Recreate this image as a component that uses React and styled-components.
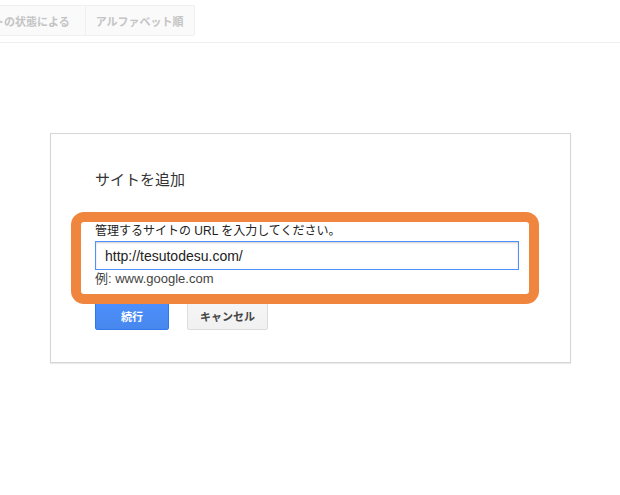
import React from "react";
import styled, { createGlobalStyle } from "styled-components";

const GlobalStyle = createGlobalStyle`
  html, body {
    margin: 0;
    padding: 0;
    background: #fff;
  }
  body {
    font-family: "Liberation Sans", Arial, "Noto Sans CJK JP", sans-serif;
    color: #222;
  }
`;

const Page = styled.div`
  width: 620px;
  height: 495px;
  overflow: hidden;
`;

const TopBar = styled.div`
  height: 43px;
  border-bottom: 1px solid #f0f0f0;
  padding-top: 5px;
  box-sizing: border-box;
  display: flex;
  margin-left: -43px;
`;

const Tab = styled.div`
  height: 29px;
  padding: ${(p) => (p.$first ? "0 15px 0 13px" : "0 10px")};
  display: flex;
  align-items: center;
  background: #fafafa;
  border: 1px solid #f0f0f0;
  border-left: ${(p) => (p.$first ? "1px solid #f0f0f0" : "none")};
  color: #c4c4c4;
  font-size: 11px;
  font-weight: bold;
  font-family: "Noto Sans CJK JP", sans-serif;
  border-radius: ${(p) => (p.$first ? "2px 0 0 2px" : "0 2px 2px 0")};
`;

const Panel = styled.div`
  position: relative;
  margin: 90px 0 0 50px;
  width: 521px;
  height: 230px;
  box-sizing: border-box;
  border: 1px solid #d6d6d6;
  box-shadow: 0 1px 1px rgba(0, 0, 0, 0.08);
  padding: 35px 0 0 44px;
`;

const Title = styled.h2`
  margin: 0;
  font-size: 15px;
  line-height: 20px;
  font-weight: normal;
  color: #333;
  font-family: "Noto Sans CJK JP", sans-serif;
`;

const Label = styled.div`
  margin-top: 34px;
  font-size: 12px;
  line-height: 16px;
  color: #222;
  font-family: "Liberation Sans", "Noto Sans CJK JP", sans-serif;
`;

const Input = styled.input`
  display: block;
  margin-top: 2px;
  width: 424px;
  height: 29px;
  box-sizing: border-box;
  border: 1px solid #4d90fe;
  box-shadow: inset 0 1px 2px rgba(0, 0, 0, 0.2);
  padding: 0 9px;
  font-size: 14px;
  font-family: "Liberation Sans", Arial, sans-serif;
  color: #222;
  outline: none;
`;

const Hint = styled.div`
  margin-top: 1px;
  font-size: 13px;
  line-height: 16px;
  color: #444;
  font-family: "Liberation Sans", "Noto Sans CJK JP", sans-serif;
`;

const Actions = styled.div`
  margin-top: 14px;
  display: flex;
  gap: 18px;
`;

const Button = styled.button`
  height: 29px;
  min-width: ${(p) => (p.$primary ? "74px" : "80px")};
  padding: 0 12px;
  box-sizing: border-box;
  border-radius: 2px;
  font-size: 11px;
  font-weight: bold;
  font-family: "Noto Sans CJK JP", sans-serif;
  border: 1px solid ${(p) => (p.$primary ? "#3079ed" : "#dcdcdc")};
  background: ${(p) =>
    p.$primary
      ? "linear-gradient(#4d90fe, #4787ed)"
      : "linear-gradient(#f5f5f5, #f1f1f1)"};
  color: ${(p) => (p.$primary ? "#fff" : "#444")};
  cursor: pointer;
`;

const Highlight = styled.div`
  position: absolute;
  left: 20px;
  top: 78px;
  width: 468px;
  height: 92px;
  box-sizing: border-box;
  border: 10px solid #f0853e;
  border-radius: 13px;
  pointer-events: none;
`;

export default function App() {
  return (
    <Page>
      <GlobalStyle />
      <TopBar>
        <Tab $first>サイトの状態による</Tab>
        <Tab>アルファベット順</Tab>
      </TopBar>
      <Panel>
        <Title>サイトを追加</Title>
        <Label>管理するサイトの URL を入力してください。</Label>
        <Input defaultValue="http://tesutodesu.com/" />
        <Hint>例: www.google.com</Hint>
        <Actions>
          <Button $primary>続行</Button>
          <Button>キャンセル</Button>
        </Actions>
        <Highlight />
      </Panel>
    </Page>
  );
}
